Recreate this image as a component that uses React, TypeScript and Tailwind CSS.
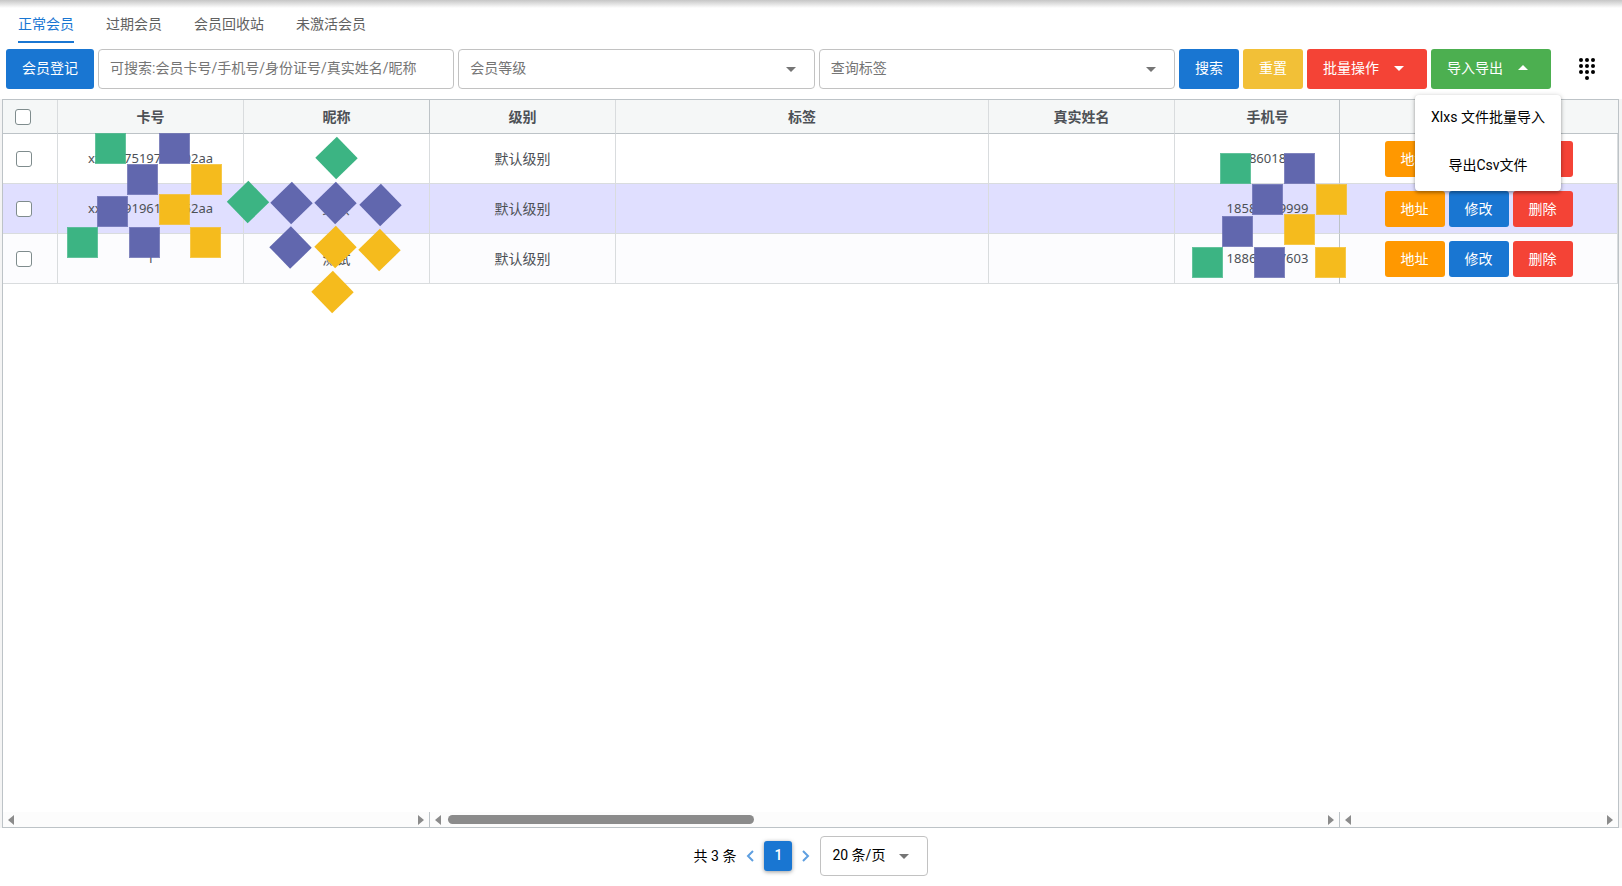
import { memo, useState } from 'react';
import cls from 'clsx';

interface Member {
  id: number;
  card: string;
  nickname: string;
  level: string;
  phone: string;
}

const TABS = ['正常会员', '过期会员', '会员回收站', '未激活会员'];

const MEMBERS: Member[] = [
  { id: 1, card: 'xx3137519756102aa', nickname: '', level: '默认级别', phone: '13786018222' },
  { id: 2, card: 'xx3089196180352aa', nickname: '红茶', level: '默认级别', phone: '18588889999' },
  { id: 3, card: '1', nickname: '测试', level: '默认级别', phone: '18866667603' },
];

const GREEN = '#3cb483';
const PURPLE = '#6167ae';
const GOLD = '#f5bb1d';

const SQUARES = [
  { x: 28, y: 0, color: GREEN },
  { x: 92, y: 0, color: PURPLE },
  { x: 60, y: 31, color: PURPLE },
  { x: 124, y: 31, color: GOLD },
  { x: 30, y: 63, color: PURPLE },
  { x: 92, y: 61, color: GOLD },
  { x: 0, y: 94, color: GREEN },
  { x: 62, y: 94, color: PURPLE },
  { x: 123, y: 94, color: GOLD },
];

const DIAMONDS = [
  { x: 110.5, y: 22, color: GREEN },
  { x: 22, y: 66, color: GREEN },
  { x: 65.5, y: 67, color: PURPLE },
  { x: 109.5, y: 67, color: PURPLE },
  { x: 154.5, y: 69, color: PURPLE },
  { x: 64.5, y: 111.5, color: PURPLE },
  { x: 109.5, y: 111, color: GOLD },
  { x: 153.5, y: 114, color: GOLD },
  { x: 106.5, y: 156, color: GOLD },
];

const Caret = ({ up, className }: { up?: boolean; className?: string }) => (
  <svg viewBox="0 0 24 24" className={cls('size-6 flex-none', className)} fill="currentColor">
    {up ? <path d="M7 14l5-5 5 5z" /> : <path d="M7 10l5 5 5-5z" />}
  </svg>
);

const SquareMask = ({ className }: { className: string }) => (
  <svg width="155" height="126" className={cls('absolute pointer-events-none', className)}>
    {SQUARES.map(({ x, y, color }) => (
      <g key={`${x}-${y}`}>
        <rect x={x} y={y} width="31" height="31" fill={color} opacity="0.8" />
        <rect x={x + 1} y={y + 1} width="29" height="29" fill={color} />
      </g>
    ))}
  </svg>
);

const DiamondMask = ({ className }: { className: string }) => (
  <svg width="177" height="178" className={cls('absolute pointer-events-none', className)}>
    {DIAMONDS.map(({ x, y, color }) => (
      <rect
        key={`${x}-${y}`}
        x={x - 15}
        y={y - 15}
        width="30"
        height="30"
        fill={color}
        transform={`rotate(46 ${x} ${y})`}
      />
    ))}
  </svg>
);

const FilterSelect = ({ label }: { label: string }) => (
  <div className="relative flex-1 min-w-0 text-[#757575]">
    <select
      aria-label={label}
      className="appearance-none w-full h-10 px-[11px] pb-0.5 rounded border border-[#c2c2c2] bg-white outline-none"
    >
      <option>{label}</option>
    </select>
    <Caret className="absolute right-3 top-2 pointer-events-none" />
  </div>
);

const ScrollTrack = ({ className, thumb }: { className: string; thumb?: boolean }) => (
  <div className={cls('h-full flex items-center gap-[7px] px-[5px] bg-[#fcfcfc] text-[#8b8b8b]', className)}>
    <svg width="6" height="10" fill="currentColor" className="flex-none">
      <path d="M0 5L6 0v10z" />
    </svg>
    <div className="flex-1 h-[9px]">
      {thumb && <div className="w-[35%] h-full rounded-full bg-[#8b8b8b]" />}
    </div>
    <svg width="6" height="10" fill="currentColor" className="flex-none">
      <path d="M6 5L0 0v10z" />
    </svg>
  </div>
);

const CheckBox = ({ label }: { label: string }) => (
  <input
    type="checkbox"
    aria-label={label}
    className="block appearance-none size-4 rounded-[3px] border border-[#7f8c8d] bg-white checked:bg-[#1976d2]"
  />
);

const MemberTable = memo(() => {
  const th = 'h-[34px] border-b border-[#bdc3c7] font-bold';
  const td = 'h-[50px] border-b border-[#d9dcde]';
  const line = 'border-r border-r-[#d9dcde]';
  const action = 'w-[60px] h-9 rounded-[3px] text-white';

  return (
    <table className="w-full table-fixed border-separate border-spacing-0 text-center text-[#4d5156] font-['Noto_Sans','Noto_Sans_CJK_SC',sans-serif]">
      <colgroup>
        <col className="w-[55px]" />
        <col className="w-[186px]" />
        <col className="w-[186px]" />
        <col className="w-[186px]" />
        <col />
        <col className="w-[186px]" />
        <col className="w-[165px]" />
        <col className="w-[278px]" />
      </colgroup>
      <thead className="bg-[#f5f7f7]">
        <tr>
          <th className={cls(th, line, 'pl-3')}>
            <CheckBox label="全选" />
          </th>
          <th className={cls(th, line)}>卡号</th>
          <th className={cls(th, 'border-r')}>昵称</th>
          <th className={cls(th, line)}>级别</th>
          <th className={cls(th, line)}>标签</th>
          <th className={cls(th, line)}>真实姓名</th>
          <th className={cls(th, 'pl-[21px] border-r')}>手机号</th>
          <th className={th}>操作</th>
        </tr>
      </thead>
      <tbody>
        {MEMBERS.map((m, index) => (
          <tr
            key={m.id}
            className={cls({ 'bg-[#e0dfff]': index === 1, 'bg-[#fcfcfe]': index === 2 })}
          >
            <td className={cls(td, line, 'pl-[13px]')}>
              <CheckBox label={`选择 ${m.card}`} />
            </td>
            <td className={cls(td, line, 'text-[13px]')}>{m.card}</td>
            <td className={cls(td, line)}>{m.nickname}</td>
            <td className={cls(td, line)}>{m.level}</td>
            <td className={cls(td, line)} />
            <td className={cls(td, line)} />
            <td className={cls(td, 'pl-[21px] border-r border-r-[#bdc3c7] text-[13px]')}>{m.phone}</td>
            <td className={cls(td, line)}>
              <div className="flex justify-center gap-1">
                <button className={cls(action, 'bg-[#ff9800]')}>地址</button>
                <button className={cls(action, 'bg-[#1976d2]')}>修改</button>
                <button className={cls(action, 'bg-[#f44336]')}>删除</button>
              </div>
            </td>
          </tr>
        ))}
      </tbody>
    </table>
  );
});

MemberTable.displayName = 'MemberTable';

export default function App() {
  const [tab, setTab] = useState(TABS[0]);
  const [menuOpen, setMenuOpen] = useState(true);

  const btn = 'flex-none h-10 px-4 pb-0.5 rounded-[3px] text-white';

  return (
    <div className="min-h-screen flex flex-col bg-white text-sm text-black font-[Roboto,'Noto_Sans_CJK_SC',sans-serif]">
      <div className="h-2 bg-linear-to-b from-[#c6c6c6] to-white" />

      <nav className="flex gap-8 px-[18px] mb-1.5">
        {TABS.map((name) => (
          <button
            key={name}
            onClick={() => setTab(name)}
            className={cls(
              'h-[35px] pb-0.5 border-b-2',
              name === tab ? 'text-[#1976d2] border-[#1976d2]' : 'text-[#616161] border-transparent',
            )}
          >
            {name}
          </button>
        ))}
      </nav>

      <div className="flex gap-1 pl-1.5 pr-[3px] mb-2.5">
        <button className={cls(btn, 'bg-[#1976d2]')}>会员登记</button>
        <div className="flex-1 min-w-0">
          <input
            type="text"
            aria-label="搜索会员"
            placeholder="可搜索:会员卡号/手机号/身份证号/真实姓名/昵称"
            className="w-full h-10 px-[11px] pb-0.5 rounded border border-[#c2c2c2] outline-none placeholder:text-[#757575]"
          />
        </div>
        <FilterSelect label="会员等级" />
        <FilterSelect label="查询标签" />
        <button className={cls(btn, 'bg-[#1976d2]')}>搜索</button>
        <button className={cls(btn, 'bg-[#f2c037]')}>重置</button>
        <button className={cls(btn, 'flex items-center gap-2 bg-[#f44336]')}>
          批量操作
          <Caret />
        </button>
        <div className="relative flex-none">
          <button
            onClick={() => setMenuOpen(!menuOpen)}
            className={cls(btn, 'flex items-center gap-2 bg-[#4caf50]')}
          >
            导入导出
            <Caret up />
          </button>
          {menuOpen && (
            <div className="absolute z-10 top-[46px] -left-4 w-[146px] flex flex-col rounded bg-white shadow-[0_1px_5px_rgba(0,0,0,0.25),0_2px_3px_rgba(0,0,0,0.2)]">
              <button className="h-12 pb-1 whitespace-nowrap">Xlxs 文件批量导入</button>
              <button className="h-12 pb-1 whitespace-nowrap">导出Csv文件</button>
            </div>
          )}
        </div>
        <button aria-label="更多" className="w-16 flex-none flex justify-center items-center">
          <svg width="24" height="24" fill="currentColor">
            {[6, 12, 18].map((x) =>
              [3, 9, 15].map((y) => <circle key={`${x}-${y}`} cx={x} cy={y} r="2" />),
            )}
            <circle cx="12" cy="21" r="2" />
          </svg>
        </button>
      </div>

      <div className="flex-1 flex flex-col pl-0.5 pr-[3px] bg-[#f4f4f4]">
        <div className="relative flex-1 flex flex-col border border-[#bdc3c7] bg-white">
          <MemberTable />
          <SquareMask className="left-16 top-[33px]" />
          <DiamondMask className="left-[223px] top-9" />
          <SquareMask className="right-[271px] top-[53px]" />
          <div className="mt-auto h-[15px] flex">
            <ScrollTrack className="w-[427px] border-r border-[#bdc3c7]" />
            <ScrollTrack className="flex-1 border-r border-[#bdc3c7]" thumb />
            <ScrollTrack className="w-[278px]" />
          </div>
        </div>
      </div>

      <footer className="flex justify-center items-center pt-2 pb-2.5">
        <span>共 3 条</span>
        <button aria-label="上一页" className="w-7 h-8 flex justify-center items-center text-[#5e9fe0]">
          <svg width="8" height="12" fill="none" stroke="currentColor" strokeWidth="2">
            <path d="M7 1L2 6l5 5" />
          </svg>
        </button>
        <button className="w-7 h-[30px] pb-0.5 rounded-[3px] bg-[#1976d2] text-white font-medium shadow-[0_1px_4px_rgba(0,0,0,0.4)]">
          1
        </button>
        <button aria-label="下一页" className="w-7 h-8 flex justify-center items-center text-[#5e9fe0]">
          <svg width="8" height="12" fill="none" stroke="currentColor" strokeWidth="2">
            <path d="M1 1l5 5-5 5" />
          </svg>
        </button>
        <div className="relative w-[108px]">
          <select
            aria-label="每页条数"
            className="appearance-none w-full h-10 px-[11px] pb-0.5 rounded border border-[#c2c2c2] bg-white outline-none"
          >
            <option>20 条/页</option>
          </select>
          <Caret className="absolute right-3 top-2 pointer-events-none text-[#757575]" />
        </div>
      </footer>
    </div>
  );
}
